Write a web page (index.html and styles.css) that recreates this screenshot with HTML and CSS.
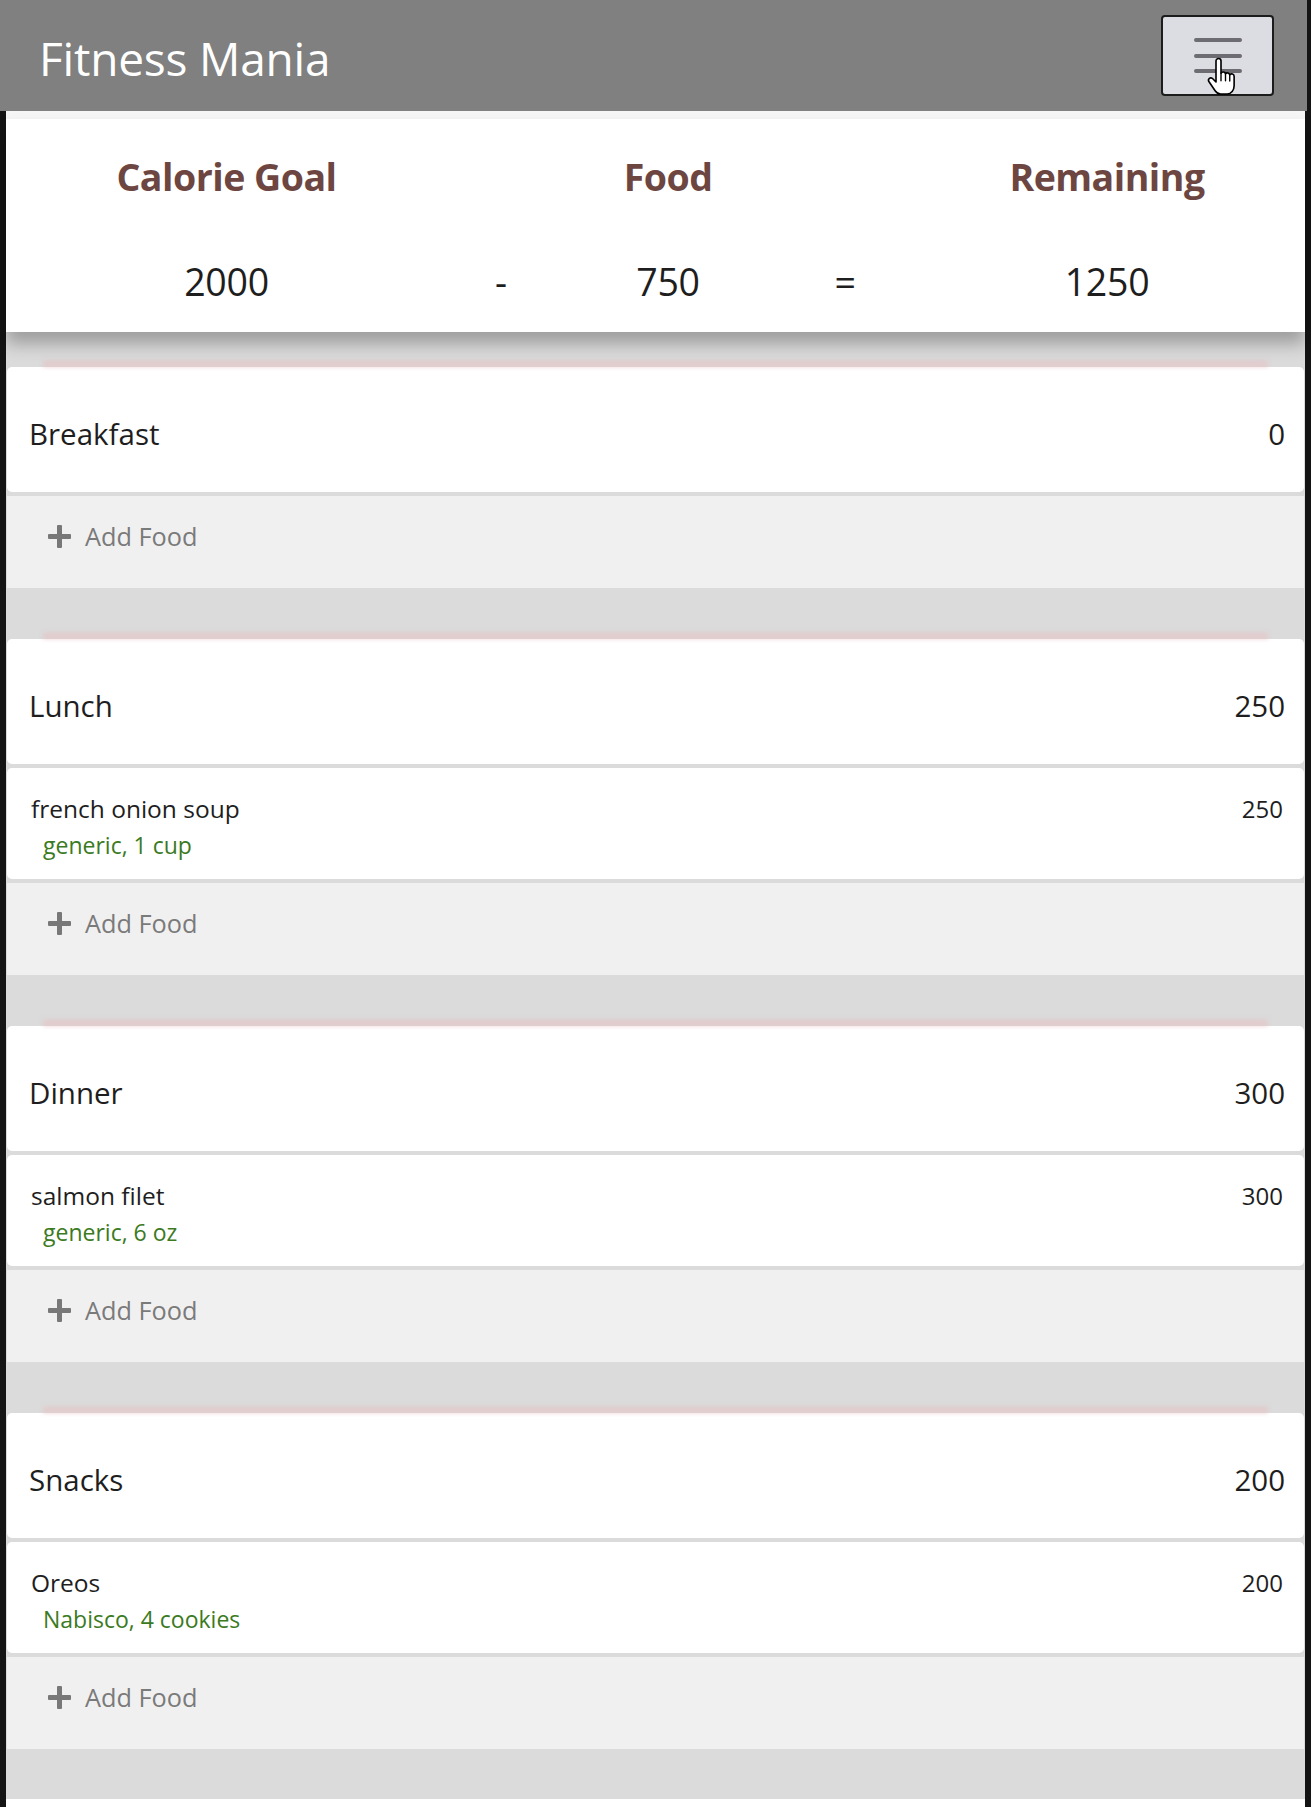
FILE: index.html
```html
<!DOCTYPE html>
<html lang="en">
<head>
<meta charset="utf-8">
<title>Fitness Mania</title>
<link rel="stylesheet" href="styles.css">
</head>
<body>
<header class="topbar">
  <span class="brand">Fitness Mania</span>
  <button class="menu-btn" type="button" aria-label="Menu">
    <span class="bar"></span><span class="bar"></span><span class="bar"></span>
    <svg class="cursor" viewBox="0 0 24 32" width="30" height="40">
      <path d="M8 3.2a2 2 0 0 1 4 0V13a2 2 0 0 1 3.6 .3a2 2 0 0 1 3.4 .9a2 2 0 0 1 3.5 1.2V23c0 3.4-2.3 6.6-5.6 6.6H11.6c-2 0-3.2-1-4.3-2.6L2.3 19.6a1.9 1.9 0 0 1 2.9-2.4L8 20Z" fill="#fff" stroke="#000" stroke-width="1.3" stroke-linejoin="round"/>
      <path d="M12 13v6M15.6 13.3v5.7M19 14.2v5" stroke="#000" stroke-width="1.1" stroke-linecap="round" fill="none"/>
    </svg>
  </button>
</header>
<main class="page">
  <section class="summary">
    <div class="sum-grid">
      <div class="lbl">Calorie Goal</div>
      <div></div>
      <div class="lbl">Food</div>
      <div></div>
      <div class="lbl">Remaining</div>
      <div class="num">2000</div>
      <div class="num">-</div>
      <div class="num">750</div>
      <div class="num">=</div>
      <div class="num">1250</div>
    </div>
  </section>

  <div class="meals">
    <section class="meal">
      <div class="meal-head"><span>Breakfast</span><span>0</span></div>
      <div class="add"><span class="plus"></span><span>Add Food</span></div>
    </section>

    <section class="meal">
      <div class="meal-head"><span>Lunch</span><span>250</span></div>
      <div class="food">
        <div class="food-info">
          <div class="food-name">french onion soup</div>
          <div class="food-detail">generic, 1 cup</div>
        </div>
        <div class="food-cal">250</div>
      </div>
      <div class="add"><span class="plus"></span><span>Add Food</span></div>
    </section>

    <section class="meal">
      <div class="meal-head"><span>Dinner</span><span>300</span></div>
      <div class="food">
        <div class="food-info">
          <div class="food-name">salmon filet</div>
          <div class="food-detail">generic, 6 oz</div>
        </div>
        <div class="food-cal">300</div>
      </div>
      <div class="add"><span class="plus"></span><span>Add Food</span></div>
    </section>

    <section class="meal">
      <div class="meal-head"><span>Snacks</span><span>200</span></div>
      <div class="food">
        <div class="food-info">
          <div class="food-name">Oreos</div>
          <div class="food-detail">Nabisco, 4 cookies</div>
        </div>
        <div class="food-cal">200</div>
      </div>
      <div class="add"><span class="plus"></span><span>Add Food</span></div>
    </section>
  </div>
</main>
</body>
</html>
```

FILE: styles.css
```css
* { box-sizing: border-box; }

html, body {
  margin: 0;
  padding: 0;
}

body {
  background: #141414;
  font-family: "Open Sans", "Noto Sans", sans-serif;
  color: #222;
  min-height: 1807px;
}

.topbar {
  height: 111px;
  margin-right: 4px;
  background: #808080;
  display: flex;
  align-items: center;
  justify-content: space-between;
  padding: 0 33px 0 39px;
}

.brand {
  color: #fff;
  font-size: 46px;
  font-weight: 400;
  letter-spacing: -0.2px;
  padding-top: 4px;
}

.menu-btn {
  position: relative;
  width: 113px;
  height: 81px;
  background: #dcdde3;
  border: 2px solid #1c1c1c;
  border-radius: 4px;
  display: flex;
  flex-direction: column;
  align-items: center;
  justify-content: center;
  gap: 11.5px;
  padding: 0;
}

.bar {
  display: block;
  width: 48px;
  height: 4px;
  border-radius: 2px;
  background: #6c6c72;
}

.cursor {
  position: absolute;
  left: 43px;
  top: 40px;
}

.page {
  margin: 0 6px;
  padding-top: 8px;
  background: linear-gradient(#f6f6f6 0, #f6f6f6 8px, #fff 8px);
  min-height: 1696px;
}

.summary {
  background: #fff;
  height: 213px;
  box-shadow: 0 12px 16px rgba(0, 0, 0, 0.28);
  position: relative;
  z-index: 1;
}

.sum-grid {
  display: grid;
  grid-template-columns: 441px 108px 226px 128px 396px;
  grid-template-rows: 107px 106px;
  align-items: center;
  justify-items: center;
}

.lbl {
  font-size: 37.5px;
  font-weight: 700;
  color: #6d4641;
  letter-spacing: -0.5px;
  padding-top: 8px;
}

.num {
  font-size: 37.5px;
  font-weight: 400;
  color: #1e1e1e;
  letter-spacing: -0.3px;
  padding-top: 4px;
}

.meals {
  background: #dbdbdb;
  padding: 35px 1px 50px;
  display: flex;
  flex-direction: column;
  gap: 51px;
}

.meal {
  display: flex;
  flex-direction: column;
  gap: 4px;
}

.meal-head {
  position: relative;
  height: 125px;
  background: #fff;
  border-radius: 5px;
  display: flex;
  align-items: center;
  justify-content: space-between;
  padding: 7px 19px 0 22px;
  font-size: 29.5px;
  color: #1e1e1e;
}

.meal-head::before {
  content: "";
  position: absolute;
  left: 36px;
  right: 36px;
  top: -9px;
  height: 9px;
  background: linear-gradient(rgba(235, 200, 200, 0), rgba(232, 185, 188, 0.75));
  filter: blur(2px);
}

.food {
  height: 111px;
  background: #fff;
  border-radius: 5px;
  display: flex;
  justify-content: space-between;
  align-items: flex-start;
  padding: 24px 21px 0 24px;
}

.food-name {
  font-size: 24.5px;
  color: #1e1e1e;
  line-height: 34px;
}

.food-detail {
  font-size: 23px;
  color: #3b7a22;
  padding-left: 12px;
  line-height: 32px;
  margin-top: 3px;
}

.food-cal {
  font-size: 24px;
  color: #1e1e1e;
  line-height: 34px;
}

.add {
  height: 92px;
  background: #f1f0f1;
  display: flex;
  align-items: center;
  padding: 0 0 12px 41px;
  font-size: 25.3px;
  color: #7a7a7a;
  gap: 14px;
}

.plus {
  position: relative;
  width: 23px;
  height: 23px;
  display: inline-block;
}

.plus::before,
.plus::after {
  content: "";
  position: absolute;
  background: #787878;
  border-radius: 1px;
}

.plus::before {
  left: 0;
  right: 0;
  top: 9px;
  height: 5px;
}

.plus::after {
  top: 0;
  bottom: 0;
  left: 9px;
  width: 5px;
}
```
